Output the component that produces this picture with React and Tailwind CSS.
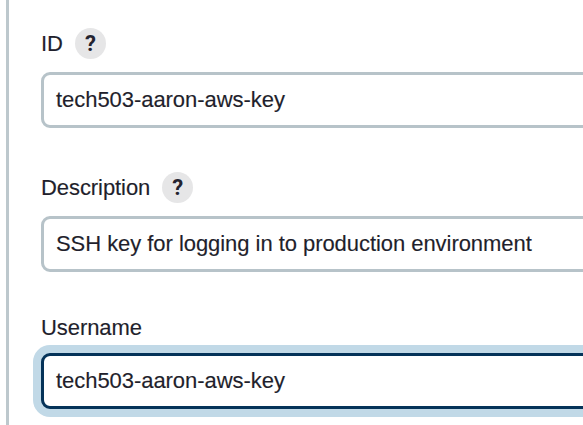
function Help() {
  return (
    <span className="flex h-[31px] w-[31px] items-center justify-center rounded-full bg-[#e6e6e7] pt-px font-[Roboto,sans-serif] text-[22px] font-bold leading-none text-[#23232f] [-webkit-text-stroke:0px]">
      ?
    </span>
  );
}

function Field({ label, help, value, focused, className }) {
  const border = focused
    ? "border-[#053359] shadow-[0_0_0_8px_#c1d9e7]"
    : "border-[#b7c3c9]";
  return (
    <div className={className}>
      <div className={`flex items-center gap-3 ${help ? "h-[31px]" : "h-[25px]"}`}>
        <span className="text-[22px] leading-[31px] tracking-[-0.07px]">{label}</span>
        {help && <Help />}
      </div>
      <div
        className={`mt-[13px] flex h-14 w-[600px] items-center whitespace-nowrap rounded-[9px] border-3 bg-white pb-px pl-3 text-[22px] tracking-[-0.05px] ${border}`}
      >
        {value}
      </div>
    </div>
  );
}

export default function App() {
  return (
    <div className="h-[425px] w-[583px] overflow-hidden bg-white pl-1.5 font-['Liberation_Sans',Arial,sans-serif] text-[#1f1f2c] [-webkit-text-stroke:0.15px_#1f1f2c]">
      <div className="h-full border-l-3 border-[#bdc8cd] pl-8 pt-7">
        <Field label="ID" help value="tech503-aaron-aws-key" />
        <Field
          className="mt-11"
          label="Description"
          help
          value="SSH key for logging in to production environment"
        />
        <Field
          className="mt-[43px]"
          label="Username"
          value="tech503-aaron-aws-key"
          focused
        />
      </div>
    </div>
  );
}
